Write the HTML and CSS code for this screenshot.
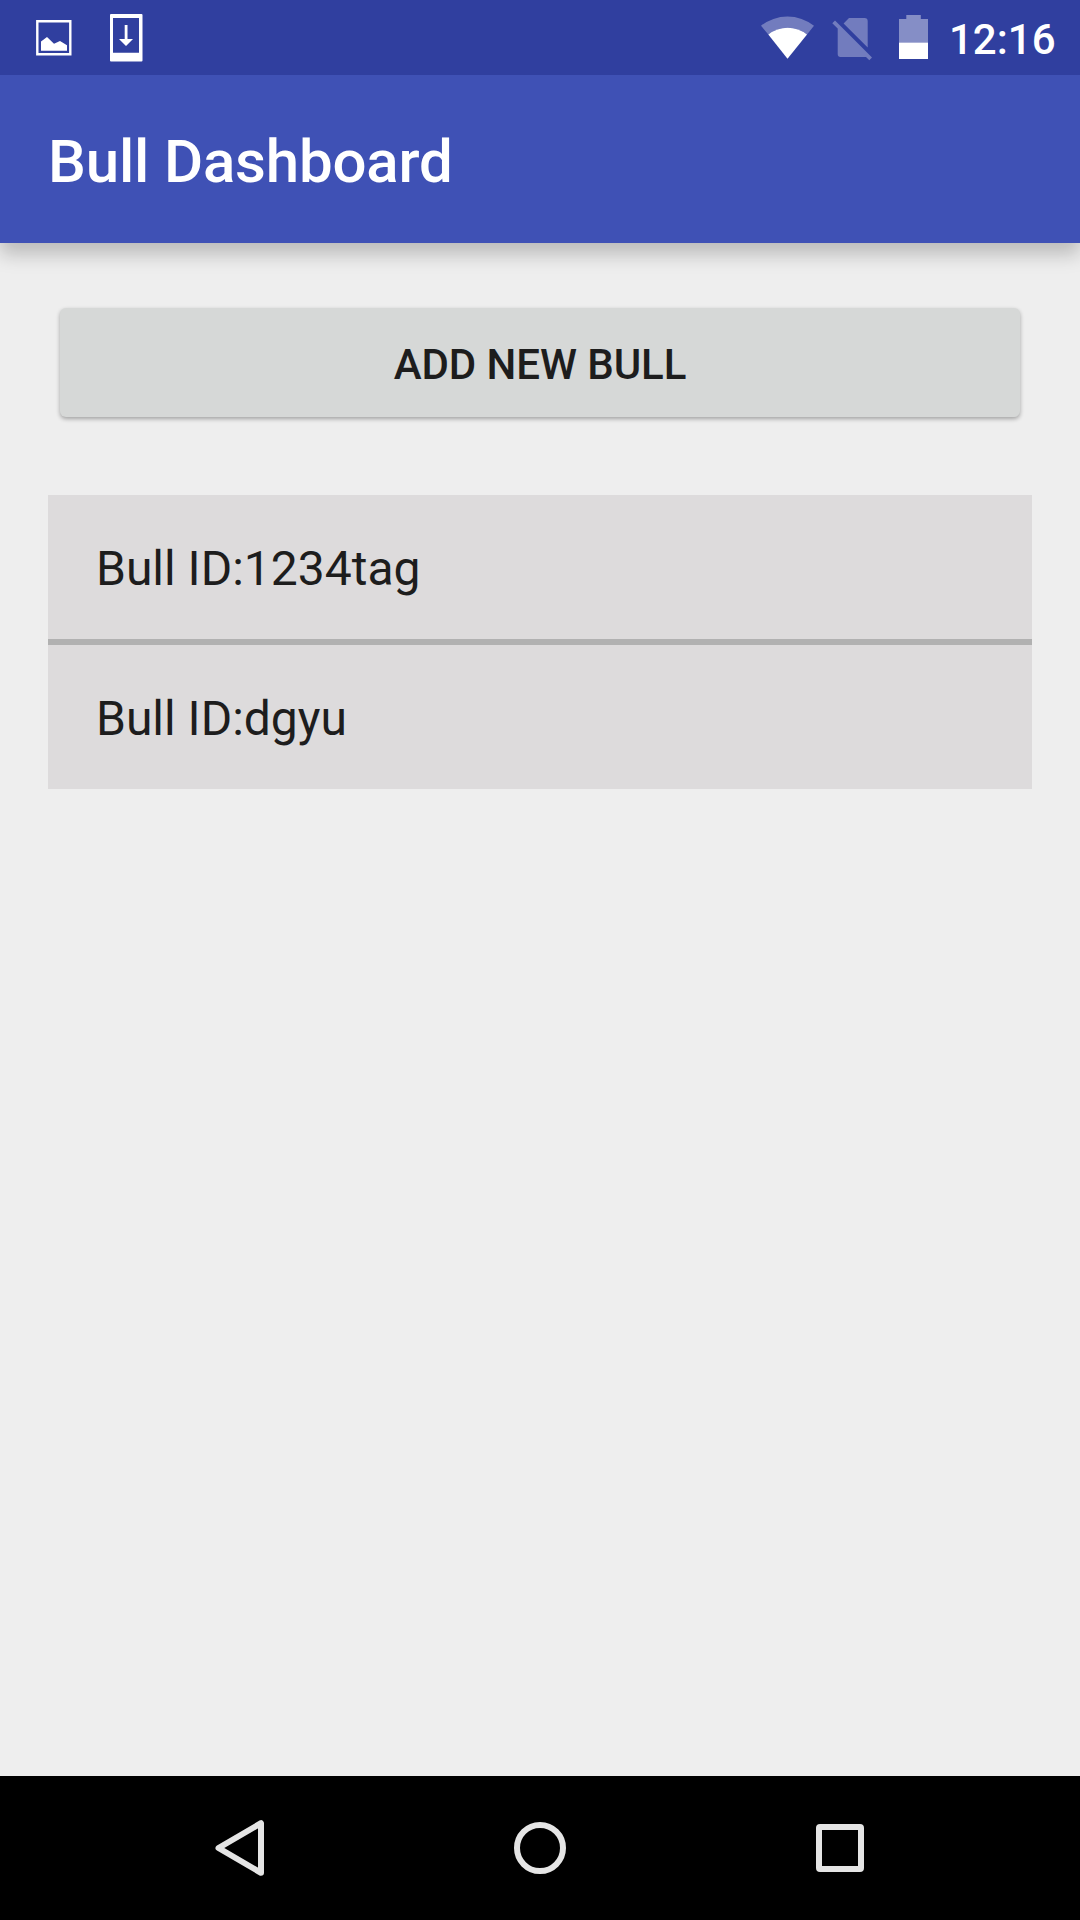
FILE: index.html
```html
<!DOCTYPE html>
<html lang="en">
<head>
<meta charset="utf-8">
<title>Bull Dashboard</title>
<link rel="stylesheet" href="styles.css">
</head>
<body>
<div class="screen">
  <div class="status-bar">
    <svg class="icon-picture" width="36" height="36" viewBox="36 20 36 36">
      <path d="M37.300 21.300H70.300V54.300H37.300Z" fill="none" stroke="#fff" stroke-width="2.400"/>
      <path d="M41 41.500L47 37L54 43.700L60 41L67 45.300V50.700H41Z" fill="#fff"/>
    </svg>
    <svg class="icon-update" width="33" height="48" viewBox="110 14 33 48">
      <path fill="#fff" fill-rule="evenodd" d="M111 14H141.500Q142.500 14 142.500 15V60.500Q142.500 61.500 141.500 61.500H111Q110 61.500 110 60.500V15Q110 14 111 14ZM113 18V52.700H139V18Z"/>
      <path fill="#fff" d="M124.700 25H127.500V39H133L126 46L119 39H124.700Z"/>
    </svg>
    <svg class="icon-wifi" width="54" height="44" viewBox="761 16 54 44">
      <path fill="#fff" fill-opacity=".32" d="M761 25.700A43 43 0 0 1 814 25.700L807 34.500A31 31 0 0 0 768.300 34.500Z"/>
      <path fill="#fff" d="M768.300 34.500A31 31 0 0 1 807 34.500L787.500 58.800Z"/>
    </svg>
    <svg class="icon-sim" width="40" height="43" viewBox="832 18 40 43">
      <path fill="#fff" fill-opacity=".32" d="M843.600 23.500L849 18H864.500Q867.700 18 867.700 21.200V47.500ZM835 20.500L872 57.400L869.300 60.200L866 57H840.500Q837.700 57 837.700 54V28.500L832.300 23.200Z"/>
    </svg>
    <svg class="icon-battery" width="29" height="44" viewBox="899 15 29 44">
      <path fill="#fff" fill-opacity=".41" d="M906.300 15H920.800V19H928V42.500H899V19H906.300Z"/>
      <path fill="#fff" d="M899 42.500H928V59H899Z"/>
    </svg>
    <span class="clock">12:16</span>
  </div>
  <header class="app-bar"><h1 class="app-title">Bull Dashboard</h1></header>
  <main class="content">
    <button class="add-button" type="button">ADD NEW BULL</button>
    <ul class="bull-list">
      <li class="bull-item">Bull ID:1234tag</li>
      <li class="bull-item">Bull ID:dgyu</li>
    </ul>
  </main>
  <nav class="nav-bar">
    <svg width="60" height="60" viewBox="210 1818 60 60">
      <path d="M261 1823.200V1872.800L218.500 1848Z" fill="none" stroke="#e5e5e5" stroke-width="6" stroke-linejoin="round"/>
    </svg>
    <svg width="60" height="60" viewBox="0 0 60 60">
      <circle cx="30" cy="30" r="23" fill="none" stroke="#e5e5e5" stroke-width="6"/>
    </svg>
    <svg width="60" height="60" viewBox="0 0 60 60">
      <path fill="#e5e5e5" fill-rule="evenodd" d="M10 6H50Q54 6 54 10V50Q54 54 50 54H10Q6 54 6 50V10Q6 6 10 6ZM12 12V48H48V12Z"/>
    </svg>
  </nav>
</div>
</body>
</html>
```
FILE: styles.css
```css
* {
  box-sizing: border-box;
}

body {
  margin: 0;
  font-family: Roboto, sans-serif;
}

.screen {
  display: flex;
  flex-direction: column;
  width: 1080px;
  height: 1920px;
  overflow: hidden;
  background: #eee;
}

.screen svg {
  display: block;
  flex: none;
}

.status-bar {
  display: flex;
  align-items: flex-start;
  flex: none;
  height: 75px;
  padding: 0 25px 0 36px;
  background: #303f9f;
}

.icon-picture {
  margin-top: 20px;
}

.icon-update {
  margin: 14px auto 0 37.700px;
}

.icon-wifi {
  margin-top: 16px;
}

.icon-sim {
  margin: 18px 27px 0 17px;
}

.icon-battery {
  margin-top: 15px;
}

.clock {
  width: 106px;
  margin-left: 21px;
  padding-top: 4px;
  color: #fff;
  font-size: 42px;
  font-weight: 500;
  line-height: 72px;
  white-space: nowrap;
}

.app-bar {
  flex: none;
  height: 168px;
  padding: 5px 48px 0;
  background: #3f51b5;
  box-shadow: 0 11px 18px rgba(0, 0, 0, .22);
  clip-path: inset(0 0 -40px 0);
}

.app-title {
  margin: 0;
  color: #fff;
  font-size: 60px;
  font-weight: 500;
  letter-spacing: -.17px;
  line-height: 163px;
}

.content {
  display: flex;
  flex: 1;
  flex-direction: column;
  padding: 65px 48px 0;
}

.add-button {
  height: 109px;
  margin: 0 12px;
  padding: 4px 0 0;
  border: 0;
  border-radius: 6px;
  background: #d6d8d7;
  box-shadow: 0 2px 4px rgba(0, 0, 0, .32);
  color: #1d1d1d;
  font: 500 42px/105px Roboto, sans-serif;
  letter-spacing: -.06px;
}

.bull-list {
  margin: 78px 0 0;
  padding: 0;
  list-style: none;
}

.bull-item {
  height: 144px;
  padding: 3px 48px 0;
  background: #dddbdc;
  color: #1d1d1d;
  font-size: 48px;
  line-height: 141px;
}

.bull-item + .bull-item {
  height: 150px;
  border-top: 6px solid #b1b1b1;
}

.nav-bar {
  display: flex;
  align-items: center;
  justify-content: center;
  flex: none;
  gap: 240px;
  height: 144px;
  background: #000;
}
```
